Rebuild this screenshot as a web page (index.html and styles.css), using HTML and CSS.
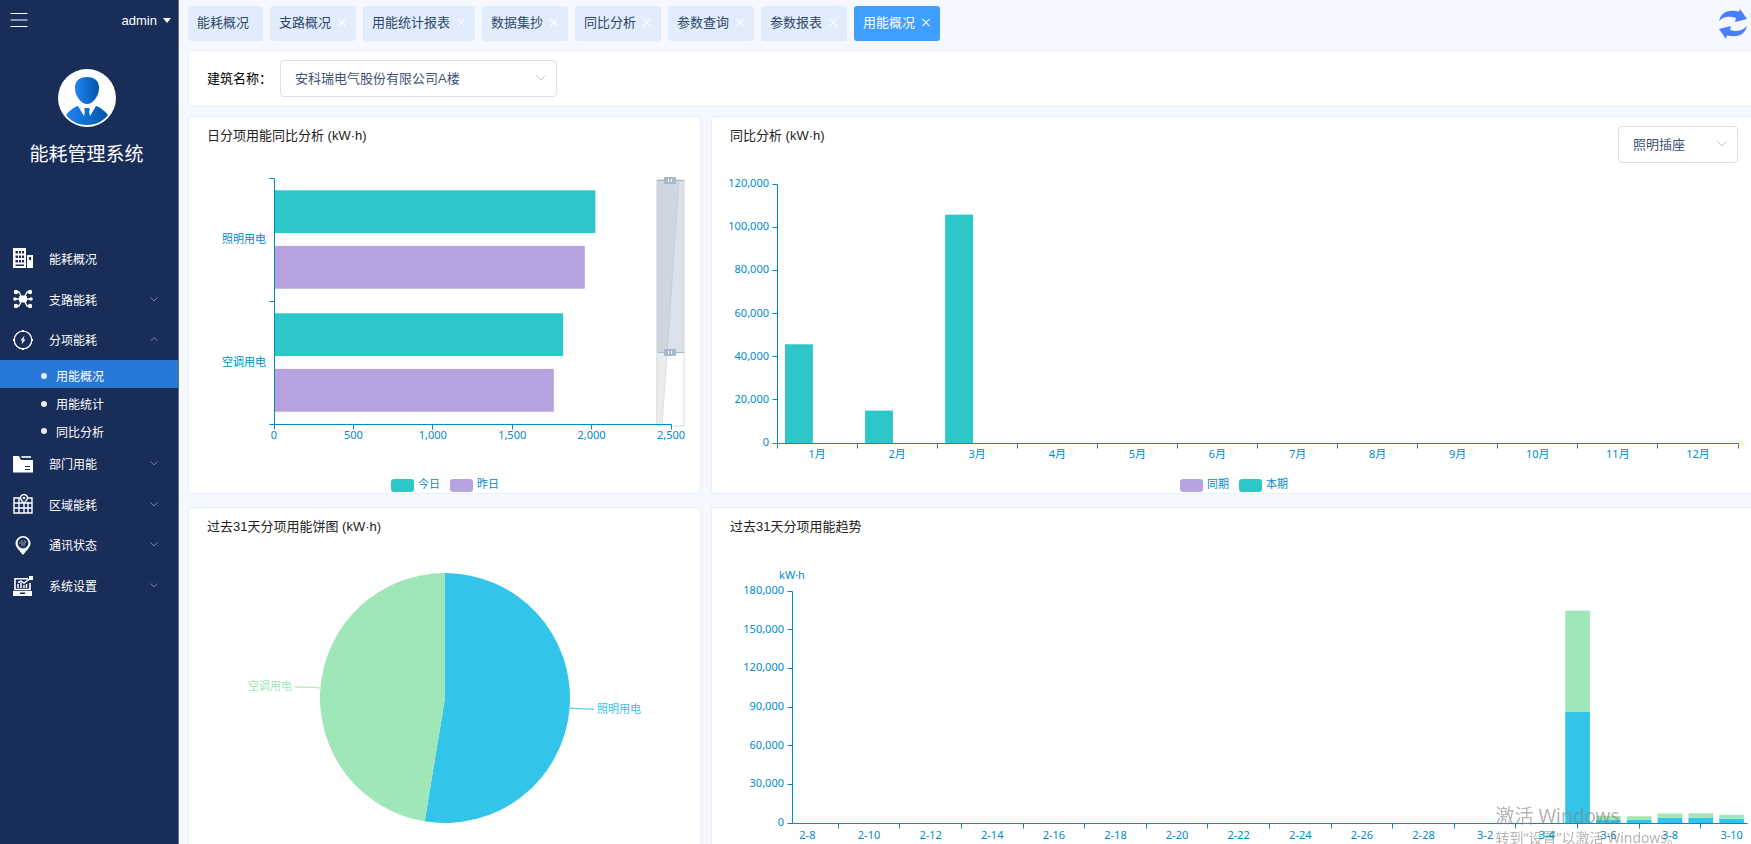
FILE: index.html
```html
<!DOCTYPE html>
<html lang="zh-CN">
<head>
    <meta charset="UTF-8">
    <meta name="viewport" content="width=device-width, initial-scale=1.0">
    <title>能耗管理系统</title>
    <link rel="stylesheet" href="styles.css">
</head>
<body>

<div class="app">
    <aside class="sidebar">
        <div class="sidebar-top">
            <button class="icon-btn" aria-label="菜单">
                <svg width="18" height="16" viewBox="0 0 18 16" fill="none" stroke="#fff" stroke-width="1.2"><path d="M0.500 1.500H17.500M0.500 8H17.500M0.500 14.500H17.500"/></svg>
            </button>
            <button class="user-btn">admin <span class="caret"></span></button>
        </div>
        <div class="profile">
            <svg width="58" height="58" viewBox="0 0 58 58">
                <defs>
                    <linearGradient id="avatarFill" x1="0" x2="1">
                        <stop offset="0" stop-color="#1f84f4"/>
                        <stop offset="1" stop-color="#0355a8"/>
                    </linearGradient>
                </defs>
                <circle cx="29" cy="29" r="29" fill="#fff"/>
                <path fill="url(#avatarFill)" d="M29 8c8 0 12 4 12 11 0 8-6 16-12 16S17 27 17 19C17 12 21 8 29 8z"/>
                <path fill="url(#avatarFill)" d="M8 46c3-4 8-8 12-9l6 10 1-5-1-1 1-2h4l1 2-1 1 1 5 6-10c4 1 9 5 12 9-5 6-11 10-21 10S13 52 8 46z"/>
            </svg>
            <h1 class="system-name">能耗管理系统</h1>
        </div>
        <nav class="menu">
            <a class="menu-item" href="#">
                <svg class="menu-icon" viewBox="0 0 20 20" fill="#fff"><path fill-rule="evenodd" d="M0 0h13v20H0zM2.500 3v2.500H5V3zM6 3v2.500h2V3zM9 3v2.500h2V3zM2.500 7.500V10H5V7.500zM6 7.500V10h2V7.500zM9 7.500V10h2V7.500zM2.500 12v2.500H5V12zM6 12v2.500h2V12zM9 12v2.500h2V12zM2.500 16.500V18H11v-1.500zM14 7h6v13h-6zM16 9v3h2V9z"/></svg>
                <span>能耗概况</span>
            </a>
            <a class="menu-item" href="#">
                <svg class="menu-icon" viewBox="0 0 20 20" fill="#fff" stroke="#fff"><rect x="6.500" y="7" width="7" height="6" rx="1"/><path fill="none" stroke-width="1.300" d="M3 3h3l2 4M17 3h-3l-2 4M3 17h3l2-4M17 17h-3l-2-4M2 10h16"/><g stroke="none"><circle cx="3" cy="3" r="2.200"/><circle cx="17" cy="3" r="2.200"/><circle cx="2" cy="10" r="1.800"/><circle cx="18" cy="10" r="1.800"/><circle cx="3" cy="17" r="2.200"/><circle cx="17" cy="17" r="2.200"/></g></svg>
                <span>支路能耗</span>
                <svg class="arrow" viewBox="0 0 8 5"><path d="M0.500 0.500L4 4 7.500 0.500"/></svg>
            </a>
            <a class="menu-item" href="#">
                <svg class="menu-icon" viewBox="0 0 20 20"><circle cx="10" cy="10" r="8.800" fill="none" stroke="#fff" stroke-width="1.300"/><path fill="#fff" d="M9 0h2v2H9zM9 18h2v2H9zM0 9h2v2H0zM18 9h2v2h-2zM11.500 5.500L7.500 10.500H9.500L8.500 14.500 12.500 9.500h-2z"/></svg>
                <span>分项能耗</span>
                <svg class="arrow" viewBox="0 0 8 5"><path d="M0.500 4L4 0.500 7.500 4"/></svg>
            </a>
            <div class="submenu">
                <a class="submenu-item active" href="#">用能概况</a>
                <a class="submenu-item" href="#">用能统计</a>
                <a class="submenu-item" href="#">同比分析</a>
            </div>
            <a class="menu-item" href="#">
                <svg class="menu-icon" viewBox="0 0 20 20" fill="#fff"><path d="M0 2h6l2 4h12v12.500H0z"/><path d="M8 2h10v2H9z" opacity=".8"/><path stroke="#192d59" d="M12 12.500h5M12 15.500h5"/></svg>
                <span>部门用能</span>
                <svg class="arrow" viewBox="0 0 8 5"><path d="M0.500 0.500L4 4 7.500 0.500"/></svg>
            </a>
            <a class="menu-item" href="#">
                <svg class="menu-icon" viewBox="0 0 20 20" fill="none" stroke="#fff" stroke-width="1.400"><path d="M7 4H1v15h18V4h-4M1 9h18M1 14h18M6 4v15M11 10v9M15 8v11"/><path fill="#192d59" d="M11 9.500C9 7 7.500 5.500 7.500 4a3.500 3.500 0 0 1 7 0C14.500 5.500 13 7 11 9.500z"/><circle cx="11" cy="4" r=".6" fill="#fff"/></svg>
                <span>区域能耗</span>
                <svg class="arrow" viewBox="0 0 8 5"><path d="M0.500 0.500L4 4 7.500 0.500"/></svg>
            </a>
            <a class="menu-item" href="#">
                <svg class="menu-icon" viewBox="0 0 20 20"><path fill="#fff" d="M10 20C6 15 2.500 12 2.500 8.500a7.500 7.500 0 0 1 15 0c0 3.500-3.500 6.500-7.500 11.500z"/><circle cx="10" cy="8" r="5.400" fill="#192d59"/><path fill="none" stroke="#fff" stroke-width=".7" opacity=".8" d="M6 8h5M8 10h4M11 5.500l2 1.500-2 1.500M8 6h2"/></svg>
                <span>通讯状态</span>
                <svg class="arrow" viewBox="0 0 8 5"><path d="M0.500 0.500L4 4 7.500 0.500"/></svg>
            </a>
            <a class="menu-item" href="#">
                <svg class="menu-icon" viewBox="0 0 20 20"><path fill="none" stroke="#fff" stroke-width="1.600" d="M15 2.800H2V13.500h15V7"/><path fill="none" stroke="#fff" stroke-width="1.500" d="M5 12V8M8 12V6.500M11 12V9M13.500 12V8M5 6.500l3-1.500 3 2L18 2"/><path fill="#fff" d="M16 0h4v4h-4z"/><path fill="#fff" fill-rule="evenodd" d="M0 15h19v5H0zM7 16.500v1.500h5v-1.500z"/></svg>
                <span>系统设置</span>
                <svg class="arrow" viewBox="0 0 8 5"><path d="M0.500 0.500L4 4 7.500 0.500"/></svg>
            </a>
        </nav>
    </aside>

    <main class="main">
        <div class="topbar">
            <div class="tab home"><a href="#">能耗概况</a></div>
            <div class="tab"><a href="#">支路概况</a><button class="close" aria-label="关闭"></button></div>
            <div class="tab"><a href="#">用能统计报表</a><button class="close" aria-label="关闭"></button></div>
            <div class="tab"><a href="#">数据集抄</a><button class="close" aria-label="关闭"></button></div>
            <div class="tab"><a href="#">同比分析</a><button class="close" aria-label="关闭"></button></div>
            <div class="tab"><a href="#">参数查询</a><button class="close" aria-label="关闭"></button></div>
            <div class="tab"><a href="#">参数报表</a><button class="close" aria-label="关闭"></button></div>
            <div class="tab active"><a href="#">用能概况</a><button class="close" aria-label="关闭"></button></div>
            <button class="icon-btn refresh" aria-label="刷新">
                <svg width="28" height="30" viewBox="0 0 28 30" fill="#477eff"><path d="M0 12C2 4 8 0 20 2.500L21 0l7 10-12 3 1-4C10 7 5 7 0 12z"/><path d="M28 17c-2 8-8 12-20 9.500L7 30 0 20l12-3-1 4c7 2 12 1 17-4z"/></svg>
            </button>
        </div>

        <div class="filter">
            <label for="building">建筑名称：</label>
            <div class="select-box building-box">
                <select id="building"><option>安科瑞电气股份有限公司A楼</option></select>
                <svg class="select-arrow" viewBox="0 0 10 6"><path d="M0.500 0.500L5 5 9.500 0.500"/></svg>
            </div>
        </div>

        <div class="cards">
            <section class="card">
                <header class="card-head"><h2>日分项用能同比分析 (kW·h)</h2></header>
                <svg class="chart" id="dayChart"></svg>
            </section>
            <section class="card edge">
                <header class="card-head">
                    <h2>同比分析 (kW·h)</h2>
                    <div class="select-box kind-box">
                        <select id="kind" aria-label="分项"><option>照明插座</option></select>
                        <svg class="select-arrow" viewBox="0 0 10 6"><path d="M0.500 0.500L5 5 9.500 0.500"/></svg>
                    </div>
                </header>
                <svg class="chart" id="yearChart"></svg>
            </section>
            <section class="card">
                <header class="card-head"><h2>过去31天分项用能饼图 (kW·h)</h2></header>
                <svg class="chart" id="pieChart"></svg>
            </section>
            <section class="card edge trend">
                <header class="card-head"><h2>过去31天分项用能趋势</h2></header>
                <svg class="chart" id="trendChart"></svg>
            </section>
        </div>
    </main>
</div>

<div class="watermark">
    <div class="watermark-title">激活 Windows</div>
    <div class="watermark-text">转到“设置”以激活 Windows。</div>
</div>

<script src="script.js"></script>
</body>
</html>
```
FILE: styles.css
```css
* {
    box-sizing: border-box;
}
body {
    margin: 0;
    font-family: "Liberation Sans", "Noto Sans CJK SC", sans-serif;
    font-size: 13px;
    color: #222;
    background: #f5f9ff;
}
a {
    color: inherit;
    text-decoration: none;
}
button {
    font: inherit;
    color: inherit;
    background: none;
    border: 0;
    padding: 0;
    cursor: pointer;
}
.app {
    display: flex;
    height: 100vh;
    overflow: hidden;
}

/* sidebar */
.sidebar {
    flex: none;
    width: 179px;
    background: #192d59;
    border-right: 1px solid #667493;
    color: #fff;
}
.sidebar-top {
    display: flex;
    justify-content: space-between;
    align-items: center;
    height: 40px;
    padding: 0 7px 0 10px;
}
.icon-btn svg {
    display: block;
}
.user-btn {
    display: flex;
    align-items: center;
    gap: 6px;
    font-size: 13px;
}
.caret {
    border: 4px solid transparent;
    border-top: 5px solid #fff;
    border-bottom: 0;
}
.profile {
    height: 198px;
    padding: 29px 5px 0 0;
    text-align: center;
}
.profile svg {
    display: block;
    margin: 0 auto;
}
.system-name {
    margin: 15px 0 0;
    font-size: 19px;
    line-height: 26px;
    font-weight: normal;
}
.menu {
    display: flex;
    flex-direction: column;
    height: 368px;
    font-size: 12px;
}
.menu-item {
    flex: 1;
    display: flex;
    align-items: center;
    padding: 0 20px 0 13px;
}
.menu-icon {
    width: 20px;
    height: 20px;
    margin-right: 16px;
}
.arrow {
    width: 8px;
    height: 5px;
    margin-left: auto;
    fill: none;
    stroke: #75829f;
}
.submenu {
    display: flex;
    flex-direction: column;
    height: 83px;
}
.submenu-item {
    flex: 1;
    display: flex;
    align-items: center;
    gap: 9px;
    padding: 4px 0 0 41px;
}
.submenu-item::before {
    content: "";
    width: 6px;
    height: 6px;
    border-radius: 50%;
    background: #e8ebf0;
}
.submenu-item.active {
    background: #2878d7;
}

/* tabs */
.main {
    flex: 1;
    min-width: 0;
    padding-left: 9px;
}
.topbar {
    display: flex;
    gap: 7px;
    padding: 6px 4px 9px 0;
}
.tab {
    display: flex;
    align-items: center;
    gap: 7px;
    height: 35px;
    padding: 0 10px 4px 9px;
    border-radius: 3px;
    background: #e1edfc;
    color: #304769;
}
.tab.home {
    padding-right: 14px;
}
.tab.active {
    background: #409eff;
    color: #fff;
}
.close {
    position: relative;
    width: 8px;
    height: 8px;
}
.close::before,
.close::after {
    content: "";
    position: absolute;
    left: -1px;
    top: 4px;
    width: 10px;
    height: 1px;
    background: #fff;
    transform: rotate(45deg);
}
.close::after {
    transform: rotate(-45deg);
}
.refresh {
    margin-left: auto;
}

/* filter */
.filter {
    display: flex;
    align-items: center;
    height: 57px;
    padding-left: 18px;
    background: #fff;
    border: 1px solid #e9edf6;
    border-right: 0;
    border-radius: 4px 0 0 4px;
}
.filter label {
    width: 73px;
    padding-bottom: 2px;
    color: #000;
}
.select-box {
    position: relative;
}
.select-box select {
    appearance: none;
    display: block;
    width: 100%;
    height: 37px;
    padding: 0 14px;
    border: 1px solid #dcdfe6;
    border-radius: 4px;
    background: #fff;
    color: #3f5274;
    font: inherit;
}
.building-box {
    width: 277px;
}
.kind-box {
    width: 120px;
}
.select-arrow {
    position: absolute;
    right: 11px;
    top: 15px;
    width: 10px;
    height: 6px;
    fill: none;
    stroke: #c0c4cc;
    pointer-events: none;
}

/* cards */
.cards {
    display: grid;
    grid-template-columns: 513px 1fr;
    gap: 13px 10px;
    margin-top: 9px;
}
.card {
    min-width: 0;
    padding: 9px 17px 0 18px;
    background: #fff;
    border: 1px solid #e9edf6;
    border-radius: 4px;
}
.card.edge {
    padding-right: 13px;
    border-right: 0;
    border-radius: 4px 0 0 4px;
}
.card.trend {
    padding-right: 4px;
}
.card-head {
    display: flex;
    justify-content: space-between;
    height: 37px;
}
.card-head h2 {
    margin: 0;
    font-size: 13px;
    line-height: 20px;
    font-weight: normal;
}
.chart {
    display: block;
    width: 100%;
    height: 330px;
    overflow: visible;
    font-family: "Noto Sans", "Noto Sans CJK SC", sans-serif;
    font-size: 11px;
}

.watermark {
    position: fixed;
    right: 70px;
    bottom: -3px;
    font-family: "Noto Sans", "Noto Sans CJK SC", sans-serif;
    color: rgba(130, 130, 130, 0.6);
    white-space: nowrap;
    pointer-events: none;
}
.watermark-title {
    font-size: 19px;
    line-height: 26px;
}
.watermark-text {
    font-size: 14px;
    line-height: 18px;
}
```
FILE: script.js
```javascript
const AXIS = "#008acd";
const TEAL = "#2ec7c9";
const PURPLE = "#b6a2de";
const BLUE = "#32c5e9";
const GREEN = "#9fe6b8";

function add(svg, tag, attrs, text) {
    const el = document.createElementNS("http://www.w3.org/2000/svg", tag);
    for (const key in attrs) el.setAttribute(key, attrs[key]);
    if (text !== undefined) el.textContent = text;
    svg.appendChild(el);
    return el;
}

function label(svg, x, y, text, anchor, color) {
    add(svg, "text", { x: x, y: y + 4, "text-anchor": anchor || "middle", fill: color || AXIS }, text);
}

// axis lines snap to the pixel grid
function line(svg, x1, y1, x2, y2, color) {
    const s = v => Math.floor(v) + 0.5;
    add(svg, "path", { d: `M${s(x1)} ${s(y1)}L${s(x2)} ${s(y2)}`, stroke: color || AXIS, fill: "none" });
}

function rect(svg, x, y, w, h, fill, rx) {
    return add(svg, "rect", { x: x, y: y, width: w, height: h, fill: fill, rx: rx || 0 });
}

function legend(svg, width, items) {
    let x = Math.round(width / 2) - 54;
    items.forEach(([name, color]) => {
        rect(svg, x, 316, 23, 13, color, 3);
        label(svg, x + 27, 321, name, "start");
        x += 59;
    });
}

function valueAxis(svg, x, top, bottom, max, step) {
    line(svg, x, top, x, bottom);
    for (let v = 0; v <= max; v += step) {
        const y = bottom - (bottom - top) * v / max;
        line(svg, x - 5, y, x, y);
        label(svg, x - 8, y - 1, v.toLocaleString("en-US"), "end");
    }
}

function drawDay(svg, width) {
    const left = 67, right = width - 12, top = 15, bottom = 261;
    const rows = [["照明用电", 2024, 1957], ["空调用电", 1821, 1762]];
    const band = (bottom - top) / rows.length;
    const bar = band * 0.8 / 2.3;
    const scale = v => (right - left) * v / 2500;

    rows.forEach(([name, today, yesterday], i) => {
        const y = top + band * i;
        rect(svg, left, y + band * 0.1, scale(today), bar, TEAL);
        rect(svg, left, y + band * 0.1 + bar * 1.3, scale(yesterday), bar, PURPLE);
        line(svg, left - 5, y, left, y);
        label(svg, left - 8, y + band / 2 - 1, name, "end");
    });

    // zoom slider
    const sx = width - 26, mid = 189;
    rect(svg, sx, top + 2, 27, bottom - top, "#fff").setAttribute("stroke", "#ddd");
    add(svg, "path", { d: `M${sx} ${top + 2}H${sx + 22}L${sx + 5} ${bottom + 2}H${sx}z`, fill: "#ebeced", stroke: "#dcdee0" });
    rect(svg, sx, top + 2, 27, mid - top - 2, "rgba(167,183,204,0.4)");
    [top + 2, mid].forEach(y => {
        line(svg, sx, y, sx + 27, y, "#a7b7cc");
        rect(svg, sx + 7, y - 3, 12, 7, "#a7b7cc", 1);
        rect(svg, sx + 11, y - 1, 1, 3, "#fff");
        rect(svg, sx + 14, y - 1, 1, 3, "#fff");
    });

    line(svg, left, top, left, bottom);
    line(svg, left - 5, bottom, right, bottom);
    for (let v = 0; v <= 2500; v += 500) {
        line(svg, left + scale(v), bottom, left + scale(v), bottom + 5);
        label(svg, left + scale(v), bottom + 11, v.toLocaleString("en-US"));
    }
    legend(svg, width, [["今日", TEAL], ["昨日", PURPLE]]);
}

function drawYear(svg, width) {
    const left = 47, right = width, top = 21, bottom = 280;
    const values = [45730, 15000, 105800];
    const band = (right - left) / 12;
    const bar = band * 0.8 / 2.3;

    values.forEach((v, i) => {
        const h = (bottom - top) * v / 120000;
        rect(svg, left + band * (i + 0.1), bottom - h, bar, h, TEAL);
    });
    valueAxis(svg, left, top, bottom, 120000, 20000);
    line(svg, left, bottom, right, bottom);
    for (let i = 0; i <= 12; i++) {
        line(svg, left + band * i, bottom, left + band * i, bottom + 5);
        if (i < 12) label(svg, left + band * (i + 0.5), bottom + 11, (i + 1) + "月");
    }
    legend(svg, width, [["同期", PURPLE], ["本期", TEAL]]);
}

function drawPie(svg, width) {
    const cx = width / 2, cy = 144, r = 125;
    const angle = 0.526 * Math.PI * 2;
    const ex = cx + r * Math.sin(angle), ey = cy - r * Math.cos(angle);
    add(svg, "path", { d: `M${cx} ${cy}V${cy - r}A${r} ${r} 0 1 1 ${ex} ${ey}z`, fill: BLUE });
    add(svg, "path", { d: `M${cx} ${cy}L${ex} ${ey}A${r} ${r} 0 0 1 ${cx} ${cy - r}z`, fill: GREEN });
    add(svg, "path", { d: `M${cx + 125} ${cy + 10}Q${cx + 133} ${cy + 11} ${cx + 149} ${cy + 11}`, stroke: BLUE, fill: "none" });
    add(svg, "path", { d: `M${cx - 125} ${cy - 10}Q${cx - 133} ${cy - 11} ${cx - 150} ${cy - 11}`, stroke: GREEN, fill: "none" });
    label(svg, cx + 152, cy + 11, "照明用电", "start", BLUE);
    label(svg, cx - 153, cy - 12, "空调用电", "end", GREEN);
}

function drawTrend(svg, width) {
    const left = 62, right = width, top = 37, bottom = 269;
    const days = 31;
    const band = (right - left) / days;
    const scale = v => (bottom - top) * v / 180000;
    // day index, lighting, air conditioning
    const data = [[25, 86500, 78300], [26, 2600, 3000], [27, 2500, 2700], [28, 4000, 3300], [29, 4100, 3400], [30, 3400, 3000]];

    data.forEach(([i, light, air]) => {
        const x = left + band * (i + 0.1);
        rect(svg, x, bottom - scale(light), band * 0.8, scale(light), BLUE);
        rect(svg, x, bottom - scale(light + air), band * 0.8, scale(air), GREEN);
    });
    valueAxis(svg, left, top, bottom, 180000, 30000);
    line(svg, left, bottom, right, bottom);
    for (let i = 0; i < days; i += 2) {
        const day = new Date(2021, 1, 8 + i);
        label(svg, left + band * (i + 0.5), bottom + 12, (day.getMonth() + 1) + "-" + day.getDate());
        if (i < days - 1) line(svg, left + band * (i + 1.5), bottom, left + band * (i + 1.5), bottom + 5);
    }
    label(svg, left, top - 16, "kW·h");
}

function drawAll() {
    const charts = { dayChart: drawDay, yearChart: drawYear, pieChart: drawPie, trendChart: drawTrend };
    for (const id in charts) {
        const svg = document.getElementById(id);
        svg.innerHTML = "";
        charts[id](svg, svg.getBoundingClientRect().width);
    }
}

drawAll();
window.addEventListener("resize", drawAll);
```
